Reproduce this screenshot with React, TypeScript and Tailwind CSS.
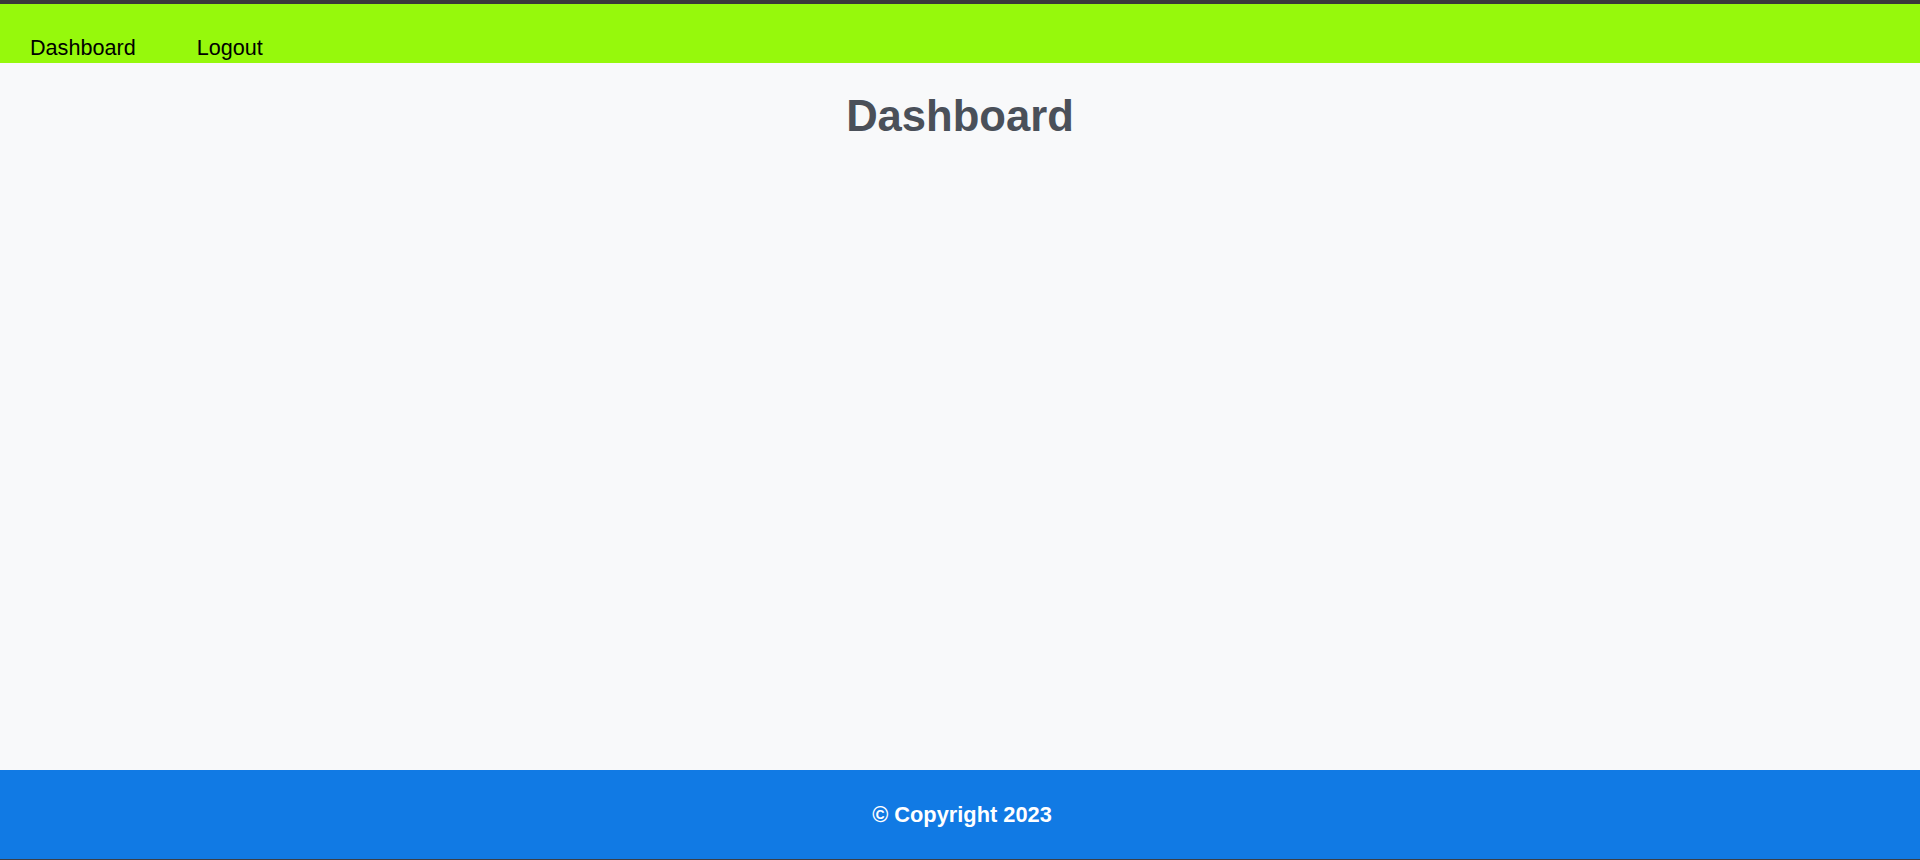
export default function App() {
  return (
    <div
      className="h-screen flex flex-col bg-[#f8f9fa] border-t-4 border-b border-t-[#3a3a3a] border-b-[#3c3f46] leading-[normal]"
      style={{ fontFamily: '"Liberation Sans", Arial, sans-serif' }}
    >
      {/* nav */}
      <nav className="h-[59px] bg-[#96f90c] flex items-end gap-[61px] pl-[30px] pb-[2px] text-[21.6px] text-black">
        <a href="#">Dashboard</a>
        <a href="#">Logout</a>
      </nav>

      <main className="flex-1">
        <h1 className="mt-[29px] text-center text-[43.6px] leading-[normal] font-bold text-[#4a5059]">Dashboard</h1>
      </main>

      <footer className="h-[89px] bg-[#117ae4] flex items-center justify-center">
        <p className="text-white font-bold text-[21.8px] pl-[4px]">© Copyright 2023</p>
      </footer>
    </div>
  );
}
